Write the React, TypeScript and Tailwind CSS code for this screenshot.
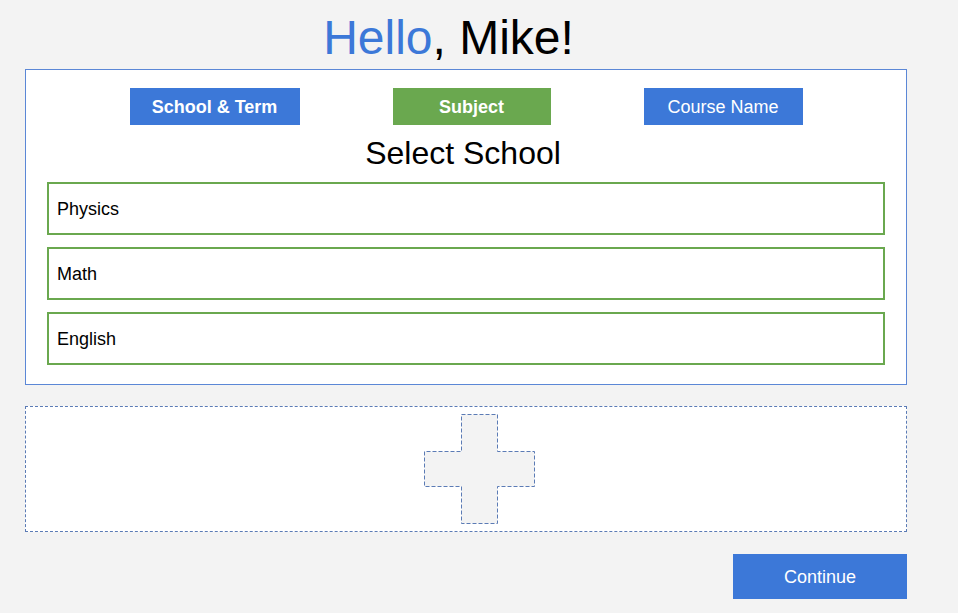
import React from "react";

const font = { fontFamily: '"Liberation Sans", Arial, sans-serif' };

const subjects = ["Physics", "Math", "English"];

export default function App() {
  return (
    <div className="min-h-screen bg-white" style={font}>
      <div className="w-[958px] h-[613px] bg-[#f3f3f3] flex flex-col">
        {/* Greeting */}
        <h1 className="pt-[10px] mb-[4px] pr-[61px] text-center text-[48px] leading-[55px] text-black">
          <span className="text-[#3c78d8]">Hello</span>, Mike!
        </h1>

        {/* Wizard panel */}
        <div className="ml-[25px] w-[882px] border border-[#5b87d6] bg-white px-[21px] pt-[18px] pb-[19px]">
          <div className="flex justify-center gap-[93px]">
            <div className="w-[170px] h-[37px] flex items-center justify-center pt-[2px] bg-[#3c78d8] text-white text-[18px] font-bold">
              School &amp; Term
            </div>
            <div className="w-[158px] h-[37px] flex items-center justify-center pt-[2px] bg-[#6aa84f] text-white text-[18px] font-bold">
              Subject
            </div>
            <div className="w-[159px] h-[37px] flex items-center justify-center pt-[2px] bg-[#3c78d8] text-white text-[18px]">
              Course Name
            </div>
          </div>

          <h2 className="mt-[10px] mb-[10px] pr-[6px] text-center text-[32px] leading-[37px] text-black">
            Select School
          </h2>

          <div className="flex flex-col gap-[12px]">
            {subjects.map((s) => (
              <div
                key={s}
                className="h-[53px] border-2 border-[#6aa84f] flex items-center pl-[8px] pt-[1px] text-[18px] text-black"
              >
                {s}
              </div>
            ))}
          </div>
        </div>

        {/* Add drop zone */}
        <div className="mt-[21px] ml-[25px] w-[882px] h-[126px] border border-dashed border-[#5b7bb5] bg-white flex items-center justify-center pl-[27px]">
          <svg width="111" height="110" viewBox="0 0 111 110">
            <polygon
              points="37.5,0.5 73.5,0.5 73.5,37.5 110.5,37.5 110.5,72.5 73.5,72.5 73.5,109.5 37.5,109.5 37.5,72.5 0.5,72.5 0.5,37.5 37.5,37.5"
              fill="#f3f3f3"
              stroke="#5b7bb5"
              strokeWidth="1"
              strokeDasharray="4 2"
            />
          </svg>
        </div>

        {/* Footer action */}
        <div className="mt-[22px] ml-[25px] w-[882px] flex justify-end">
          <button className="w-[174px] h-[45px] pt-[2px] bg-[#3c78d8] text-white text-[18px]">Continue</button>
        </div>
      </div>
    </div>
  );
}
